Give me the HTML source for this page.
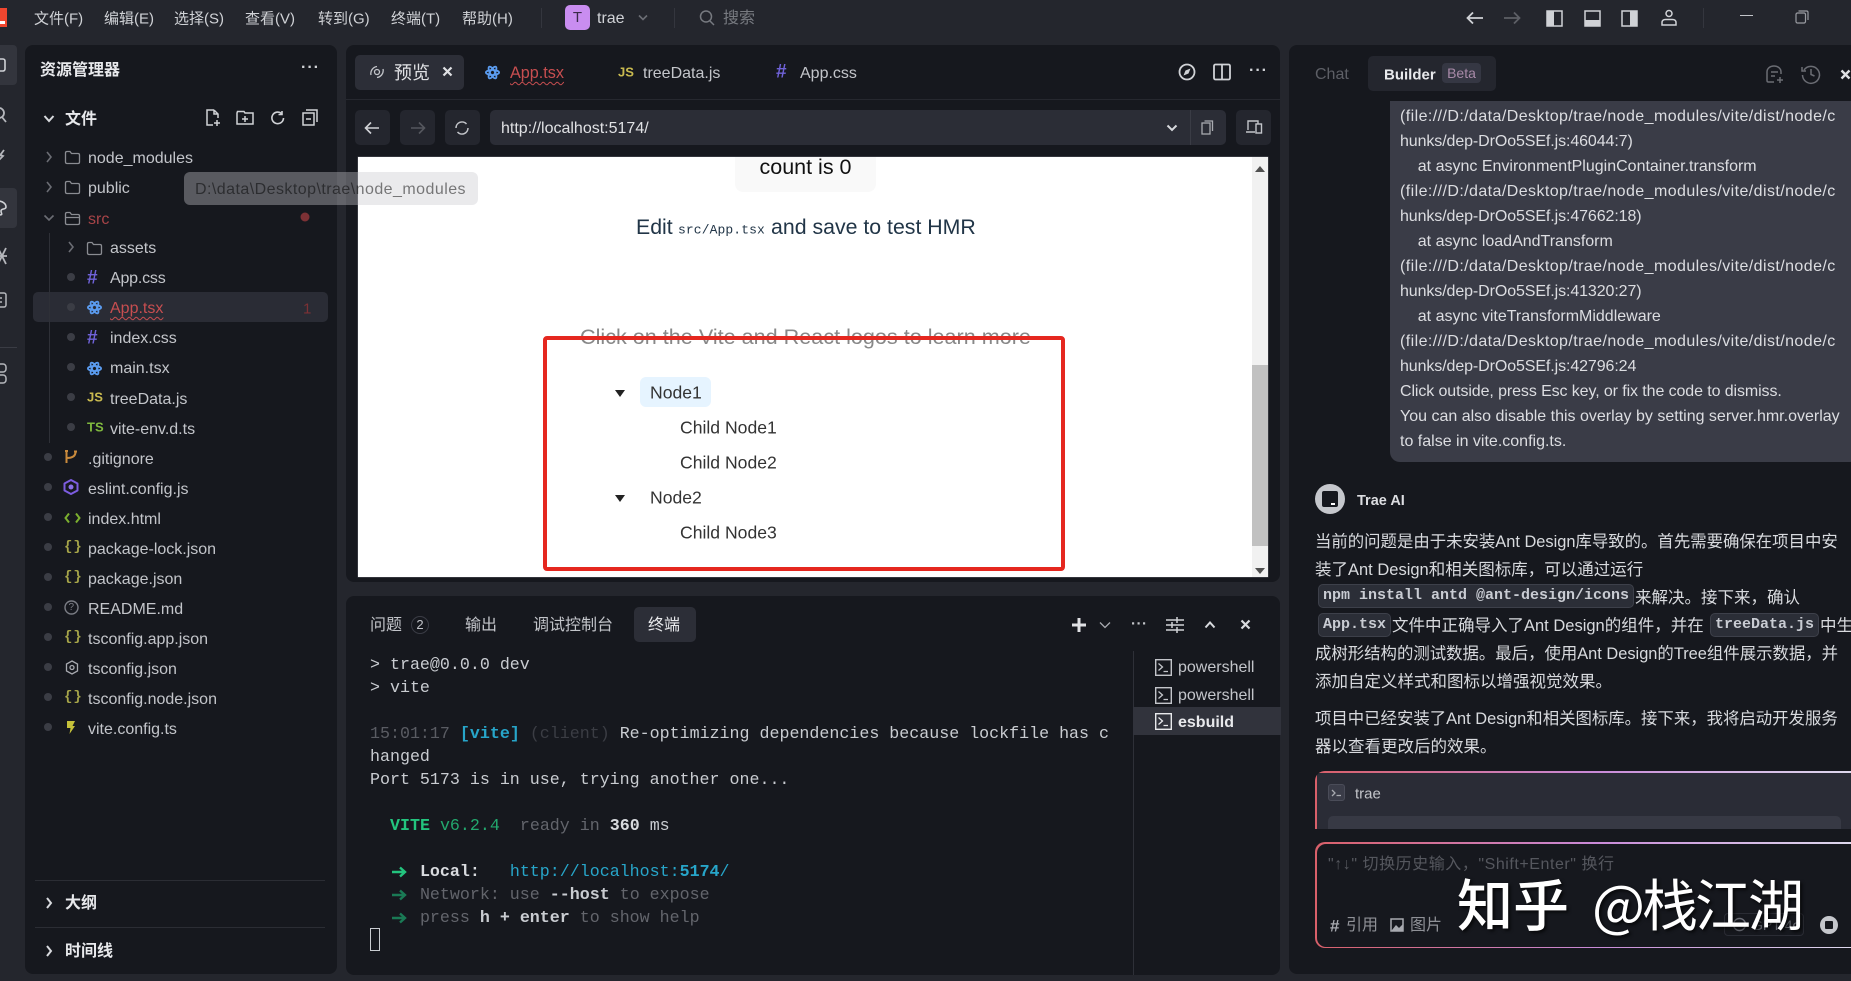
<!DOCTYPE html>
<html lang="zh"><head><meta charset="utf-8"><title>Trae</title>
<style>
*{box-sizing:border-box}
html,body{margin:0;padding:0;width:1851px;height:981px;overflow:hidden;background:#24262d;font-family:"Liberation Sans","Noto Sans CJK SC",sans-serif}
.a{position:absolute}
.t{position:absolute;white-space:nowrap;line-height:1;transform:translateY(-50%);margin-top:1px}
.n{margin-top:0}
.f{font-size:16px;color:#c3c5ca}
.p{background:#16181e;position:absolute;border-radius:8px}
svg{position:absolute;overflow:visible;fill:none}
.m{font-family:"Liberation Mono",monospace;font-size:16.65px;color:#c9ccd1;line-height:23px;white-space:pre;position:absolute;left:370px;margin-top:1px}
.b{position:absolute;background:#24262e;border-radius:5px;width:35px;height:35px;top:110px}
.d{position:absolute;width:8px;height:8px;border-radius:50%;background:#3b3d45;transform:translate(-50%,-50%)}
.l{font-size:16px;color:#d8dade;font-family:"Liberation Sans","Noto Sans CJK SC",sans-serif}
.code{position:absolute;background:#2b2e37;border:1px solid #3d404a;border-radius:5px;height:24px;font:bold 15px/22px "Liberation Mono",monospace;color:#c9ccd3;padding:0 4px;white-space:pre}
.menu{font-size:15px;color:#d0d2d6;margin-top:0}
.fl{letter-spacing:.42px}
.hl{letter-spacing:-.1px}
</style></head><body>

<!-- title bar -->
<div class="a" style="left:0;top:8px;width:7px;height:19px;background:#f0462f"></div>
<div class="a" style="left:0;top:21px;width:5px;height:3px;background:#fff"></div>
<div class="t menu" style="left:34px;top:19px">文件(F)</div>
<div class="t menu" style="left:104px;top:19px">编辑(E)</div>
<div class="t menu" style="left:174px;top:19px">选择(S)</div>
<div class="t menu" style="left:245px;top:19px">查看(V)</div>
<div class="t menu" style="left:318px;top:19px">转到(G)</div>
<div class="t menu" style="left:391px;top:19px">终端(T)</div>
<div class="t menu" style="left:462px;top:19px">帮助(H)</div>
<div class="a" style="left:541px;top:8px;width:1px;height:20px;background:#34363e"></div>
<div class="a" style="left:565px;top:5px;width:25px;height:25px;background:#c98df0;border-radius:5px;color:#3a2a4a;font-size:15px;line-height:25px;text-align:center">T</div>
<div class="t menu" style="left:597px;top:19px;font-size:16px">trae</div>
<svg style="left:638px;top:14px" width="10" height="8"><path d="M1 1.500L5 5.500L9 1.500" stroke="#6b6d74" stroke-width="1.600"/></svg>
<div class="a" style="left:674px;top:8px;width:1px;height:20px;background:#34363e"></div>
<svg style="left:699px;top:9px" width="16" height="18"><circle cx="7" cy="7.500" r="5.500" stroke="#777a80" stroke-width="1.500"/><path d="M11 12L15 16" stroke="#777a80" stroke-width="1.500"/></svg>
<div class="t n" style="left:723px;top:19px;font-size:16px;color:#777a80">搜索</div>

<svg style="left:1466px;top:11px" width="18" height="14"><path d="M17 7H2M7 1.500L1.500 7L7 12.500" stroke="#d0d2d6" stroke-width="1.800"/></svg>
<svg style="left:1503px;top:11px" width="18" height="14"><path d="M1 7H16M11 1.500L16.500 7L11 12.500" stroke="#5d5f66" stroke-width="1.800"/></svg>
<svg style="left:1546px;top:10px" width="17" height="17"><rect x="1" y="1" width="15" height="15" stroke="#d0d2d6" stroke-width="1.500"/><rect x="1" y="1" width="7" height="15" fill="#d0d2d6"/></svg>
<svg style="left:1584px;top:10px" width="17" height="17"><rect x="1" y="1" width="15" height="15" stroke="#d0d2d6" stroke-width="1.500"/><rect x="1" y="10" width="15" height="6" fill="#d0d2d6"/></svg>
<svg style="left:1621px;top:10px" width="17" height="17"><rect x="1" y="1" width="15" height="15" stroke="#d0d2d6" stroke-width="1.500"/><rect x="9" y="1" width="7" height="15" fill="#d0d2d6"/></svg>
<svg style="left:1660px;top:9px" width="18" height="18"><circle cx="9" cy="4.500" r="3" stroke="#d0d2d6" stroke-width="1.500"/><path d="M2 16V13.500C2 11.500 3.500 10.500 5.500 10.500H12.500C14.500 10.500 16 11.500 16 13.500V16Z" stroke="#d0d2d6" stroke-width="1.500"/></svg>
<div class="a" style="left:1703px;top:8px;width:1px;height:20px;background:#34363e"></div>
<div class="a" style="left:1740px;top:15px;width:13px;height:1px;background:#c3c5ca"></div>
<svg style="left:1795px;top:10px" width="14" height="14"><rect x="1" y="3" width="9.500" height="10" rx="1.500" stroke="#9a9ca2" stroke-width="1.200"/><path d="M3.500 1H11.500C12.500 1 13 1.500 13 2.500V10" stroke="#9a9ca2" stroke-width="1.200"/></svg>

<!-- activity bar -->
<div class="a" style="left:0;top:45px;width:17px;height:40px;background:#33353d;border-radius:0 4px 4px 0"></div>
<div class="a" style="left:0;top:188px;width:17px;height:40px;background:#33353d;border-radius:0 4px 4px 0"></div>
<svg style="left:0;top:55px" width="10" height="20"><rect x="-6" y="4" width="11" height="12" rx="2" stroke="#d0d2d6" stroke-width="1.600"/></svg>
<svg style="left:0;top:104px" width="10" height="20"><circle cx="-1" cy="9" r="5" stroke="#b5b7bc" stroke-width="1.800"/><path d="M2 13L6 18" stroke="#b5b7bc" stroke-width="1.800"/></svg>
<svg style="left:0;top:148px" width="10" height="16"><path d="M-2 10L4 2M-2 6L3 8L-2 13" stroke="#b5b7bc" stroke-width="1.800"/></svg>
<svg style="left:0;top:198px" width="10" height="20"><path d="M-2 3C3 3 6 6 6 9S1 10 1 13S4 17 -2 17" stroke="#d0d2d6" stroke-width="1.600"/></svg>
<svg style="left:0;top:246px" width="10" height="20"><path d="M-2 2L6 18M6 2L-2 18M-2 10H7" stroke="#b5b7bc" stroke-width="1.800"/></svg>
<svg style="left:0;top:291px" width="10" height="20"><rect x="-6" y="2" width="12" height="14" rx="2" stroke="#b5b7bc" stroke-width="1.500"/><path d="M-1 7H2M-1 11H2" stroke="#b5b7bc" stroke-width="1.500"/></svg>
<div class="a" style="left:0;top:347px;width:17px;height:1px;background:#3a3c44"></div>
<svg style="left:0;top:363px" width="10" height="22"><rect x="-4" y="1" width="10" height="8" rx="3" stroke="#b5b7bc" stroke-width="1.500"/><rect x="-4" y="12" width="10" height="8" rx="3" stroke="#b5b7bc" stroke-width="1.500"/></svg>

<!-- explorer -->
<div class="p" style="left:25px;top:45px;width:312px;height:929px"></div>
<div class="t" style="left:40px;top:70px;font-size:16px;font-weight:bold;color:#e8e9ec">资源管理器</div>
<div class="t" style="left:301px;top:67px;font-size:16px;font-weight:bold;color:#d0d2d6;letter-spacing:1px">···</div>
<svg style="left:43px;top:114px" width="12" height="10"><path d="M1.500 2L6 7L10.500 2" stroke="#d8dade" stroke-width="2"/></svg>
<div class="t" style="left:65px;top:119px;font-size:16px;font-weight:bold;color:#e8e9ec">文件</div>
<svg style="left:205px;top:109px" width="16" height="18"><path d="M9 1H2V16H8M9 1L13 5V9M9 1V5H13M12 11V17M9 14H15" stroke="#d0d2d6" stroke-width="1.500"/></svg>
<svg style="left:236px;top:110px" width="18" height="16"><path d="M1 3V14H17V3H9L8 1.500H1.500ZM9 6V12M6 9H12" stroke="#d0d2d6" stroke-width="1.500"/></svg>
<svg style="left:270px;top:110px" width="16" height="16"><path d="M13.500 8A5.800 5.800 0 1 1 11.500 3.500M12 1V4.500H8.500" stroke="#d0d2d6" stroke-width="1.600"/></svg>
<svg style="left:302px;top:109px" width="16" height="17"><rect x="1" y="4" width="11" height="12" stroke="#d0d2d6" stroke-width="1.500"/><path d="M4 1H15V13M4 10H9" stroke="#d0d2d6" stroke-width="1.500"/></svg>

<div class="a" style="left:33px;top:292px;width:295px;height:30px;background:#2a2c35;border-radius:5px"></div>
<div class="a" style="left:49px;top:233px;width:1px;height:210px;background:#2e3037"></div>

<svg style="left:45px;top:151px" width="8" height="12"><path d="M2 1L6 6L2 11" stroke="#6b6d74" stroke-width="1.600"/></svg>
<svg style="left:64px;top:150px" width="17" height="15"><path d="M1.500 3C1.500 2 2 1.500 3 1.500H6L7.500 3.500H14C15 3.500 15.500 4 15.500 5V12C15.500 13 15 13.500 14 13.500H3C2 13.500 1.500 13 1.500 12Z" stroke="#8a8c92" stroke-width="1.300"/></svg>
<div class="t f" style="left:88px;top:158px">node_modules</div>
<svg style="left:45px;top:181px" width="8" height="12"><path d="M2 1L6 6L2 11" stroke="#6b6d74" stroke-width="1.600"/></svg>
<svg style="left:64px;top:180px" width="17" height="15"><path d="M1.500 3C1.500 2 2 1.500 3 1.500H6L7.500 3.500H14C15 3.500 15.500 4 15.500 5V12C15.500 13 15 13.500 14 13.500H3C2 13.500 1.500 13 1.500 12Z" stroke="#8a8c92" stroke-width="1.300"/></svg>
<div class="t f" style="left:88px;top:188px">public</div>
<svg style="left:43px;top:214px" width="12" height="8"><path d="M1.500 1.500L6 6L10.500 1.500" stroke="#6b6d74" stroke-width="1.600"/></svg>
<svg style="left:64px;top:211px" width="17" height="15"><path d="M1.500 12V3C1.500 2 2 1.500 3 1.500H6L7.500 3.500H14C15 3.500 15.500 4 15.500 5V6.500H3.500M1.500 6.500H15.500V12C15.500 13 15 13.500 14 13.500H3C2 13.500 1.500 13 1.500 12Z" stroke="#8a8c92" stroke-width="1.300"/></svg>
<div class="t f" style="left:88px;top:219px;color:#a84448">src</div>
<div class="d" style="left:305px;top:217px;width:9px;height:9px;background:#7c3135"></div>

<svg style="left:67px;top:241px" width="8" height="12"><path d="M2 1L6 6L2 11" stroke="#6b6d74" stroke-width="1.600"/></svg>
<svg style="left:86px;top:241px" width="17" height="15"><path d="M1.500 3C1.500 2 2 1.500 3 1.500H6L7.500 3.500H14C15 3.500 15.500 4 15.500 5V12C15.500 13 15 13.500 14 13.500H3C2 13.500 1.500 13 1.500 12Z" stroke="#8a8c92" stroke-width="1.300"/></svg>
<div class="t f" style="left:110px;top:248px">assets</div>

<div class="d" style="left:70.500px;top:277px"></div>
<div class="t" style="left:87px;top:277px;font-size:19px;font-weight:bold;color:#6f62d8">#</div>
<div class="t f" style="left:110px;top:278px;letter-spacing:-.2px">App.css</div>

<div class="d" style="left:70.500px;top:307px"></div>
<svg style="left:87px;top:300px" width="15" height="15" viewBox="0 0 17 17"><g stroke="#5b9cf0" stroke-width="2"><ellipse cx="8.500" cy="8.500" rx="7.500" ry="2.800"/><ellipse cx="8.500" cy="8.500" rx="7.500" ry="2.800" transform="rotate(60 8.500 8.500)"/><ellipse cx="8.500" cy="8.500" rx="7.500" ry="2.800" transform="rotate(120 8.500 8.500)"/></g></svg>
<div class="t f" style="left:110px;top:308px;color:#c74e50;text-decoration:underline wavy #c74e50 1px;text-underline-offset:3px;line-height:1.100">App.tsx</div>
<div class="t" style="left:303px;top:308px;font-size:15px;color:#7c3135">1</div>

<div class="d" style="left:70.500px;top:337px"></div>
<div class="t" style="left:87px;top:337px;font-size:19px;font-weight:bold;color:#6f62d8">#</div>
<div class="t f" style="left:110px;top:338px">index.css</div>

<div class="d" style="left:70.500px;top:367px"></div>
<svg style="left:87px;top:361px" width="15" height="15" viewBox="0 0 17 17"><g stroke="#5b9cf0" stroke-width="2"><ellipse cx="8.500" cy="8.500" rx="7.500" ry="2.800"/><ellipse cx="8.500" cy="8.500" rx="7.500" ry="2.800" transform="rotate(60 8.500 8.500)"/><ellipse cx="8.500" cy="8.500" rx="7.500" ry="2.800" transform="rotate(120 8.500 8.500)"/></g></svg>
<div class="t f" style="left:110px;top:368px">main.tsx</div>

<div class="d" style="left:70.500px;top:397px"></div>
<div class="t" style="left:87px;top:396px;font-size:13px;font-weight:bold;color:#c8b94f">JS</div>
<div class="t f" style="left:110px;top:399px">treeData.js</div>

<div class="d" style="left:70.500px;top:427px"></div>
<div class="t" style="left:87px;top:426px;font-size:13px;font-weight:bold;color:#7fb83e">TS</div>
<div class="t f" style="left:110px;top:429px">vite-env.d.ts</div>

<div class="d" style="left:48px;top:457px"></div>
<svg style="left:64px;top:449px" width="14" height="16"><path d="M2.500 2V14M2.500 9C7 9 11.500 8 11.500 3M1 2H4M10 2.500H13" stroke="#c98a3c" stroke-width="2"/></svg>
<div class="t f" style="left:88px;top:459px">.gitignore</div>

<div class="d" style="left:48px;top:487px"></div>
<svg style="left:63px;top:479px" width="16" height="16"><path d="M8 1L14.500 4.500V11.500L8 15L1.500 11.500V4.500Z" stroke="#7c5ce0" stroke-width="2" stroke-linejoin="round"/><circle cx="8" cy="8" r="2.500" fill="#8a70e8"/></svg>
<div class="t f" style="left:88px;top:489px">eslint.config.js</div>

<div class="d" style="left:48px;top:517px"></div>
<svg style="left:64px;top:512px" width="17" height="12"><path d="M5 1.500L1.500 6L5 10.500M12 1.500L15.500 6L12 10.500" stroke="#7cb02f" stroke-width="2"/></svg>
<div class="t f" style="left:88px;top:519px">index.html</div>

<div class="d" style="left:48px;top:547px"></div>
<div class="t" style="left:64px;top:546px;font:bold 14px 'Liberation Mono',monospace;color:#a5a449;letter-spacing:1px">{}</div>
<div class="t f" style="left:88px;top:549px">package-lock.json</div>

<div class="d" style="left:48px;top:577px"></div>
<div class="t" style="left:64px;top:576px;font:bold 14px 'Liberation Mono',monospace;color:#a5a449;letter-spacing:1px">{}</div>
<div class="t f" style="left:88px;top:579px">package.json</div>

<div class="d" style="left:48px;top:607px"></div>
<svg style="left:64px;top:600px" width="15" height="15"><circle cx="7.500" cy="7.500" r="6.500" stroke="#7b7d85" stroke-width="1.400"/></svg>
<div class="t" style="left:68.500px;top:607px;font-size:10px;color:#7b7d85">?</div>
<div class="t f" style="left:88px;top:609px">README.md</div>

<div class="d" style="left:48px;top:637px"></div>
<div class="t" style="left:64px;top:636px;font:bold 14px 'Liberation Mono',monospace;color:#a5a449;letter-spacing:1px">{}</div>
<div class="t f" style="left:88px;top:639px">tsconfig.app.json</div>

<div class="d" style="left:48px;top:667px"></div>
<svg style="left:65px;top:660px" width="14" height="15"><path d="M7 1L12.500 4V11L7 14L1.500 11V4Z" stroke="#a8aab0" stroke-width="1.300"/><circle cx="7" cy="7.500" r="2" stroke="#a8aab0" stroke-width="1.300"/></svg>
<div class="t f" style="left:88px;top:669px">tsconfig.json</div>

<div class="d" style="left:48px;top:697px"></div>
<div class="t" style="left:64px;top:696px;font:bold 14px 'Liberation Mono',monospace;color:#a5a449;letter-spacing:1px">{}</div>
<div class="t f" style="left:88px;top:699px">tsconfig.node.json</div>

<div class="d" style="left:48px;top:727px"></div>
<svg style="left:66px;top:720px" width="10" height="15"><path d="M1 1H9L6.500 6H9L3.500 14L4.500 8H1Z" fill="#c5c13a"/></svg>
<div class="t f" style="left:88px;top:729px">vite.config.ts</div>

<div class="a" style="left:35px;top:880px;width:290px;height:1px;background:#2b2d34"></div>
<svg style="left:45px;top:897px" width="8" height="12"><path d="M2 1L6 6L2 11" stroke="#d8dade" stroke-width="2"/></svg>
<div class="t" style="left:65px;top:903px;font-size:16px;font-weight:bold;color:#e8e9ec">大纲</div>
<div class="a" style="left:35px;top:927px;width:290px;height:1px;background:#2b2d34"></div>
<svg style="left:45px;top:945px" width="8" height="12"><path d="M2 1L6 6L2 11" stroke="#d8dade" stroke-width="2"/></svg>
<div class="t" style="left:65px;top:951px;font-size:16px;font-weight:bold;color:#e8e9ec">时间线</div>

<!-- editor / preview panel -->
<div class="p" style="left:346px;top:45px;width:934px;height:537px"></div>
<div class="a" style="left:355px;top:55px;width:109px;height:35px;background:#2c2e37;border-radius:5px"></div>
<svg style="left:369px;top:64px" width="16" height="16"><circle cx="8" cy="8" r="2.500" stroke="#c3c5ca" stroke-width="1.300"/><path d="M2 11C1 7 4 3 8 2.500M14 5C15 9 12 13 8 13.500" stroke="#c3c5ca" stroke-width="1.300"/></svg>
<div class="t" style="left:394px;top:72px;font-size:18px;color:#e0e1e4">预览</div>
<svg style="left:442px;top:66px" width="11" height="11"><path d="M1.500 1.500L9.500 9.500M9.500 1.500L1.500 9.500" stroke="#e0e1e4" stroke-width="2.200"/></svg>
<svg style="left:485px;top:65px" width="15" height="15" viewBox="0 0 17 17"><g stroke="#5b9cf0" stroke-width="2"><ellipse cx="8.500" cy="8.500" rx="7.500" ry="2.800"/><ellipse cx="8.500" cy="8.500" rx="7.500" ry="2.800" transform="rotate(60 8.500 8.500)"/><ellipse cx="8.500" cy="8.500" rx="7.500" ry="2.800" transform="rotate(120 8.500 8.500)"/></g></svg>
<div class="t" style="left:510px;top:73px;font-size:16.200px;color:#c74e50;text-decoration:underline wavy #c74e50 1px;text-underline-offset:3px;line-height:1.100">App.tsx</div>
<div class="t" style="left:618px;top:71px;font-size:13px;font-weight:bold;color:#c8b94f">JS</div>
<div class="t" style="left:643px;top:73px;font-size:16px;color:#c3c5ca">treeData.js</div>
<div class="t" style="left:776px;top:71px;font-size:19px;font-weight:bold;color:#6f62d8">#</div>
<div class="t" style="left:800px;top:73px;font-size:16px;color:#c3c5ca">App.css</div>
<svg style="left:1178px;top:63px" width="18" height="18"><circle cx="9" cy="9" r="7.500" stroke="#d0d2d6" stroke-width="1.800"/><path d="M12.500 5.500L10.500 10.500L5.500 12.500L7.500 7.500Z" fill="#d0d2d6"/></svg>
<svg style="left:1213px;top:63px" width="18" height="18"><rect x="1" y="1.500" width="16" height="15" rx="1.500" stroke="#d0d2d6" stroke-width="1.800"/><path d="M9 1.500V16.500" stroke="#d0d2d6" stroke-width="1.800"/></svg>
<div class="t" style="left:1249px;top:70px;font-size:16px;font-weight:bold;color:#d0d2d6;letter-spacing:1px">···</div>
<div class="a" style="left:346px;top:99px;width:934px;height:1px;background:#26282f"></div>

<div class="b" style="left:355px"></div>
<svg style="left:364px;top:121px" width="16" height="14"><path d="M15 7H2M7 1.500L1.500 7L7 12.500" stroke="#d0d2d6" stroke-width="1.600"/></svg>
<div class="b" style="left:400px"></div>
<svg style="left:410px;top:121px" width="16" height="14"><path d="M1 7H14M9 1.500L14.500 7L9 12.500" stroke="#55575e" stroke-width="1.600"/></svg>
<div class="b" style="left:445px"></div>
<svg style="left:454px;top:120px" width="16" height="16"><path d="M2 8A6 6 0 0 1 12.500 4M14 8A6 6 0 0 1 3.500 12" stroke="#c3c5ca" stroke-width="1.500"/></svg>
<div class="a" style="left:490px;top:110px;width:736px;height:35px;background:#2b2d36;border-radius:5px"></div>
<div class="t" style="left:501px;top:128px;font-size:16px;color:#e0e1e4">http://localhost:5174/</div>
<svg style="left:1166px;top:124px" width="12" height="8"><path d="M1.500 1.500L6 6L10.500 1.500" stroke="#d8dade" stroke-width="2"/></svg>
<div class="a" style="left:1190px;top:110px;width:1px;height:35px;background:#3a3c45"></div>
<svg style="left:1201px;top:120px" width="13" height="15"><rect x="1" y="3" width="8" height="11" stroke="#a8aab0" stroke-width="1.300"/><path d="M3.500 1H11.500V11" stroke="#a8aab0" stroke-width="1.300"/></svg>
<div class="b" style="left:1236px"></div>
<svg style="left:1245px;top:119px" width="18" height="16"><path d="M3 11V2H13V5M1 13H10" stroke="#c3c5ca" stroke-width="1.400"/><rect x="11" y="5" width="5.500" height="9" stroke="#c3c5ca" stroke-width="1.400"/></svg>

<!-- preview page -->
<div class="a" style="left:357px;top:156px;width:912px;height:422px;border:1px solid #33353c;border-radius:2px"></div>
<div class="a" style="left:358px;top:157px;width:910px;height:420px;background:#fff;overflow:hidden">
  <div class="a" style="left:377px;top:-20px;width:141px;height:55px;background:#f9f9f9;border-radius:8px"></div>
  <div class="t" style="left:380px;width:135px;text-align:center;top:10px;font-size:21.500px;color:#111;line-height:1.100">count is 0</div>
  <div class="t" style="left:278px;top:70px;font-size:21.300px;color:#213547;line-height:1.200">Edit</div>
  <div class="t" style="left:320px;top:72px;font:13px 'Liberation Mono',monospace;color:#213547;letter-spacing:.1px">src/App.tsx</div>
  <div class="t" style="left:413px;top:70px;font-size:21.300px;color:#213547;line-height:1.200">and save to test HMR</div>
  <div class="t n" style="left:222px;top:180px;font-size:21.600px;color:#888;line-height:1.200">Click on the Vite and React logos to learn more</div>

  <div class="a" style="left:185px;top:179px;width:522px;height:235px;border:4px solid #e5271f;border-radius:4px"></div>

  <svg style="left:257px;top:233px" width="10" height="7"><path d="M0 0H10L5 7Z" fill="#222"/></svg>
  <div class="a" style="left:282px;top:220px;width:71px;height:30px;background:#e6f4ff;border-radius:6px"></div>
  <div class="t n" style="left:292px;top:236px;font-size:17.600px;color:#333;line-height:1.100">Node1</div>
  <div class="t n" style="left:322px;top:271px;font-size:17.600px;color:#333;line-height:1.100">Child Node1</div>
  <div class="t n" style="left:322px;top:306px;font-size:17.600px;color:#333;line-height:1.100">Child Node2</div>
  <svg style="left:257px;top:338px" width="10" height="7"><path d="M0 0H10L5 7Z" fill="#222"/></svg>
  <div class="t n" style="left:292px;top:341px;font-size:17.600px;color:#333;line-height:1.100">Node2</div>
  <div class="t n" style="left:322px;top:376px;font-size:17.600px;color:#333;line-height:1.100">Child Node3</div>

  <div class="a" style="left:894px;top:0;width:16px;height:420px;background:#f1f1f1"></div>
  <div class="a" style="left:894px;top:208px;width:16px;height:181px;background:#c1c1c1"></div>
  <svg style="left:897px;top:9px" width="10" height="6"><path d="M0 6H10L5 0Z" fill="#505050"/></svg>
  <svg style="left:897px;top:411px" width="10" height="6"><path d="M0 0H10L5 6Z" fill="#505050"/></svg>
</div>

<!-- tooltip -->
<div class="a" style="left:184px;top:172px;width:294px;height:33px;background:rgba(200,200,205,.38);border-radius:6px"></div>
<div class="t" style="left:195px;top:189px;font-size:16px;letter-spacing:.45px;color:rgba(0,0,0,.5)">D:\data\Desktop\trae\node_modules</div>

<!-- terminal -->
<div class="p" style="left:346px;top:596px;width:934px;height:379px"></div>
<div class="t" style="left:370px;top:625px;font-size:16px;color:#c3c5ca">问题</div>
<div class="a" style="left:411px;top:616px;width:18px;height:18px;border:1px solid #3a3c45;border-radius:50%;font-size:13px;line-height:16px;text-align:center;color:#c3c5ca">2</div>
<div class="t" style="left:465px;top:625px;font-size:16px;color:#c3c5ca">输出</div>
<div class="t" style="left:533px;top:625px;font-size:16px;color:#c3c5ca">调试控制台</div>
<div class="a" style="left:634px;top:607px;width:62px;height:35px;background:#2c2e37;border-radius:5px"></div>
<div class="t" style="left:648px;top:625px;font-size:16px;color:#e8e9ec">终端</div>
<svg style="left:1072px;top:618px" width="14" height="14"><path d="M7 0V14M0 7H14" stroke="#e0e1e4" stroke-width="3"/></svg>
<svg style="left:1099px;top:621px" width="12" height="8"><path d="M1 1.500L6 6.500L11 1.500" stroke="#a8aab0" stroke-width="1.300"/></svg>
<div class="t" style="left:1131px;top:623px;font-size:15px;font-weight:bold;color:#c3c5ca;letter-spacing:.5px">···</div>
<svg style="left:1166px;top:616px" width="18" height="18"><path d="M0 4H18M0 9H18M0 14H18M11 1V7M6 6V12M11 11V17" stroke="#d0d2d6" stroke-width="1.500"/></svg>
<svg style="left:1204px;top:621px" width="12" height="8"><path d="M1.500 6.500L6 1.500L10.500 6.500" stroke="#d8dade" stroke-width="2"/></svg>
<svg style="left:1240px;top:619px" width="11" height="11"><path d="M1.500 1.500L9.500 9.500M9.500 1.500L1.500 9.500" stroke="#d8dade" stroke-width="2.200"/></svg>

<div class="m" style="top:652px">&gt; trae@0.0.0 dev</div>
<div class="m" style="top:675px">&gt; vite</div>
<div class="m" style="top:721px"><span style="color:#5a5c63">15:01:17</span> <span style="color:#27a5c9;font-weight:bold">[vite]</span> <span style="color:#3b3d44">(client)</span> Re-optimizing dependencies because lockfile has c</div>
<div class="m" style="top:744px">hanged</div>
<div class="m" style="top:767px">Port 5173 is in use, trying another one...</div>
<div class="m" style="top:813px">  <b style="color:#23c47e">VITE</b> <span style="color:#23a86e">v6.2.4</span>  <span style="color:#63656c">ready in</span> <b style="color:#d8dade">360</b> ms</div>
<div class="m" style="top:859px">     <b style="color:#d8dade">Local:</b>   <span style="color:#27a5c9">http://localhost:<b>5174</b>/</span></div>
<div class="m" style="top:882px">     <span style="color:#63656c">Network: use</span> <b style="color:#c9ccd1">--host</b> <span style="color:#63656c">to expose</span></div>
<div class="m" style="top:905px">     <span style="color:#63656c">press</span> <b style="color:#c9ccd1">h + enter</b> <span style="color:#63656c">to show help</span></div>
<svg style="left:391px;top:866px" width="16" height="12"><path d="M1 6H14M9 1.500L14 6L9 10.500" stroke="#23c47e" stroke-width="2.400"/></svg>
<svg style="left:391px;top:889px" width="16" height="12"><path d="M1 6H14M9 1.500L14 6L9 10.500" stroke="#1a7a55" stroke-width="2.400"/></svg>
<svg style="left:391px;top:912px" width="16" height="12"><path d="M1 6H14M9 1.500L14 6L9 10.500" stroke="#1a7a55" stroke-width="2.400"/></svg>
<div class="a" style="left:370px;top:928px;width:10px;height:23px;border:1px solid #c9ccd1"></div>

<div class="a" style="left:1133px;top:651px;width:1px;height:324px;background:#2e3038"></div>
<div class="a" style="left:1133px;top:707px;width:148px;height:28px;background:#31333c"></div>
<svg style="left:1155px;top:659px" width="17" height="17"><rect x=".7" y=".7" width="15.600" height="15.600" stroke="#c3c5ca" stroke-width="1.400"/><path d="M3.500 4.500L7.500 8L3.500 11.500M8.500 12.500H13" stroke="#c3c5ca" stroke-width="1.300"/></svg>
<div class="t" style="left:1178px;top:667px;font-size:16px;color:#c3c5ca">powershell</div>
<svg style="left:1155px;top:687px" width="17" height="17"><rect x=".7" y=".7" width="15.600" height="15.600" stroke="#c3c5ca" stroke-width="1.400"/><path d="M3.500 4.500L7.500 8L3.500 11.500M8.500 12.500H13" stroke="#c3c5ca" stroke-width="1.300"/></svg>
<div class="t" style="left:1178px;top:695px;font-size:16px;color:#c3c5ca">powershell</div>
<svg style="left:1155px;top:713px" width="17" height="17"><rect x=".7" y=".7" width="15.600" height="15.600" stroke="#e8e9ec" stroke-width="1.400"/><path d="M3.500 4.500L7.500 8L3.500 11.500M8.500 12.500H13" stroke="#e8e9ec" stroke-width="1.300"/></svg>
<div class="t" style="left:1178px;top:722px;font-size:16px;font-weight:bold;color:#e8e9ec">esbuild</div>

<!-- right panel -->
<div class="p" style="left:1289px;top:45px;width:600px;height:929px"></div>
<div class="t n" style="left:1315px;top:75px;font-size:16px;color:#5d5f66">Chat</div>
<div class="a" style="left:1368px;top:56px;width:128px;height:35px;background:#24262e;border-radius:5px"></div>
<div class="t n" style="left:1384px;top:75px;font-size:15px;font-weight:bold;color:#e8e9ec">Builder</div>
<div class="a" style="left:1442px;top:63px;width:39px;height:20px;background:#353743;border-radius:4px;font-size:14px;line-height:20px;text-align:center;color:#a88aa8">Beta</div>
<svg style="left:1765px;top:64px" width="20" height="20"><path d="M9 18H3.500C2.500 18 2 17.500 2 16.500V8C2 4.500 5 2 9 2S16 4.500 16 8V10M6 8H13M6 12H10M15 13V19M12 16H18" stroke="#6b6d74" stroke-width="1.500"/></svg>
<svg style="left:1801px;top:64px" width="20" height="20"><path d="M3 6A8.500 8.500 0 1 1 1.500 11M1 3V7H5M10 5V10.500L13.500 12" stroke="#6b6d74" stroke-width="1.500"/></svg>
<svg style="left:1840px;top:69px" width="11" height="11"><path d="M1.500 1.500L9.500 9.500M9.500 1.500L1.500 9.500" stroke="#e0e1e4" stroke-width="2.400"/></svg>

<div class="a" style="left:1390px;top:101px;width:470px;height:361px;background:#3a3c47;border-radius:0 0 10px 10px"></div>
<div class="a l" style="left:1400px;top:104px;line-height:25px;white-space:pre;color:#dcdde1"><span class="fl">(file:///D:/data/Desktop/trae/node_modules/vite/dist/node/c</span>
<span class="hl">hunks/dep-DrOo5SEf.js:46044:7)</span>
    at async EnvironmentPluginContainer.transform
<span class="fl">(file:///D:/data/Desktop/trae/node_modules/vite/dist/node/c</span>
<span class="hl">hunks/dep-DrOo5SEf.js:47662:18)</span>
    at async loadAndTransform
<span class="fl">(file:///D:/data/Desktop/trae/node_modules/vite/dist/node/c</span>
<span class="hl">hunks/dep-DrOo5SEf.js:41320:27)</span>
    at async viteTransformMiddleware
<span class="fl">(file:///D:/data/Desktop/trae/node_modules/vite/dist/node/c</span>
<span class="hl">hunks/dep-DrOo5SEf.js:42796:24</span>
<span class="hl">Click outside, press Esc key, or fix the code to dismiss.</span>
You can also disable this overlay by setting server.hmr.overlay
to false in vite.config.ts.</div>

<div class="a" style="left:1315px;top:484px;width:30px;height:30px;border-radius:50%;background:#c5c7cc"></div>
<div class="a" style="left:1322px;top:491px;width:16px;height:16px;background:#16181e;border-radius:2px"></div>
<div class="a" style="left:1331px;top:503px;width:4px;height:1.500px;background:#fff"></div>
<div class="t" style="left:1357px;top:500px;font-size:14.500px;font-weight:bold;color:#dcdde1">Trae AI</div>

<div class="t l n" style="left:1315px;top:542px;font-size:16.400px">当前的问题是由于未安装Ant Design库导致的。首先需要确保在项目中安</div>
<div class="t l n" style="left:1315px;top:570px;font-size:16.500px">装了Ant Design和相关图标库，可以通过运行</div>
<div class="code" style="left:1318px;top:584px">npm install antd @ant-design/icons</div>
<div class="t l n" style="left:1635px;top:598px;font-size:16.500px">来解决。接下来，确认</div>
<div class="code" style="left:1318px;top:613px">App.tsx</div>
<div class="t l n" style="left:1392px;top:626px;font-size:16.500px">文件中正确导入了Ant Design的组件，并在</div>
<div class="code" style="left:1710px;top:613px">treeData.js</div>
<div class="t l n" style="left:1820px;top:626px;font-size:16.500px">中生</div>
<div class="t l n" style="left:1315px;top:654px;font-size:16.400px">成树形结构的测试数据。最后，使用Ant Design的Tree组件展示数据，并</div>
<div class="t l n" style="left:1315px;top:682px;font-size:16.500px">添加自定义样式和图标以增强视觉效果。</div>
<div class="t l n" style="left:1315px;top:719px;font-size:16.400px">项目中已经安装了Ant Design和相关图标库。接下来，我将启动开发服务</div>
<div class="t l n" style="left:1315px;top:747px;font-size:16.500px">器以查看更改后的效果。</div>

<!-- terminal card -->
<div class="a" style="left:1315px;top:771px;width:560px;height:58px;overflow:hidden;background:#2a2c36;border-radius:10px 10px 0 0">
  <div class="a" style="left:0;top:0;width:100%;height:1.500px;background:linear-gradient(90deg,#d9606a,#c98ad8 50%,#e0e0f0)"></div>
  <div class="a" style="left:0;top:0;width:1.500px;height:100%;background:#d9606a"></div>
  <div class="a" style="left:13px;top:45px;width:513px;height:30px;background:#373944;border-radius:5px"></div>
</div>
<div class="a" style="left:1328px;top:784px;width:17px;height:17px;background:#3a3c48;border-radius:3px;border:1px solid #4a4c58"></div>
<svg style="left:1331px;top:789px" width="11" height="8"><path d="M1 1L4 4L1 7M5.500 6.500H10" stroke="#a8aab0" stroke-width="1.300"/></svg>
<div class="t" style="left:1355px;top:793px;font-size:15px;color:#c3c5ca">trae</div>

<!-- input -->
<div class="a" style="left:1315px;top:842px;width:560px;height:106px;border-radius:10px;padding:1.500px;background:linear-gradient(90deg,#d9606a,#c98ad8 50%,#e0e0f0)"><div style="width:100%;height:100%;background:#16181e;border-radius:9px"></div></div>
<div class="t" style="left:1328px;top:864px;font-size:16px;letter-spacing:.55px;color:#55575e">"↑↓" 切换历史输入，"Shift+Enter" 换行</div>
<div class="t" style="left:1330px;top:925px;font-size:17px;font-weight:bold;color:#a8aab0">#</div>
<div class="t" style="left:1346px;top:925px;font-size:16px;color:#8f9197">引用</div>
<svg style="left:1390px;top:918px" width="14" height="14"><rect x="1" y="1" width="12" height="12" stroke="#a8aab0" stroke-width="1.500"/><path d="M2 12L6 7L9 10L13 6V13H2Z" fill="#a8aab0"/></svg>
<div class="t" style="left:1410px;top:925px;font-size:16px;color:#8f9197">图片</div>
<div class="a" style="left:1724px;top:913px;width:80px;height:23px;border:1px solid #2a2c34;border-radius:4px"></div>
<svg style="left:1732px;top:917px" width="15" height="15"><circle cx="7.500" cy="7.500" r="6" stroke="#6a6c74" stroke-width="1.400"/></svg>
<div class="t" style="left:1752px;top:924px;font-size:14px;color:#6a6c74">GPT-4o</div>
<div class="a" style="left:1820px;top:916px;width:18px;height:18px;border-radius:50%;background:#c5c7cc"></div>
<div class="a" style="left:1825px;top:921px;width:8px;height:8px;background:#16181e;border-radius:1px"></div>

<!-- watermark -->
<div class="t n" style="left:1457px;top:903px;font-size:56px;font-family:'Noto Sans CJK SC',sans-serif;font-weight:500;color:#fff;text-shadow:2px 2px 3px rgba(0,0,0,.7)">知乎</div>
<div class="t n" style="left:1592px;top:903px;font-size:56px;font-family:'Noto Sans CJK SC',sans-serif;font-weight:400;color:#fff;text-shadow:2px 2px 3px rgba(0,0,0,.7);letter-spacing:-3px">@栈江湖</div>

</body></html>
